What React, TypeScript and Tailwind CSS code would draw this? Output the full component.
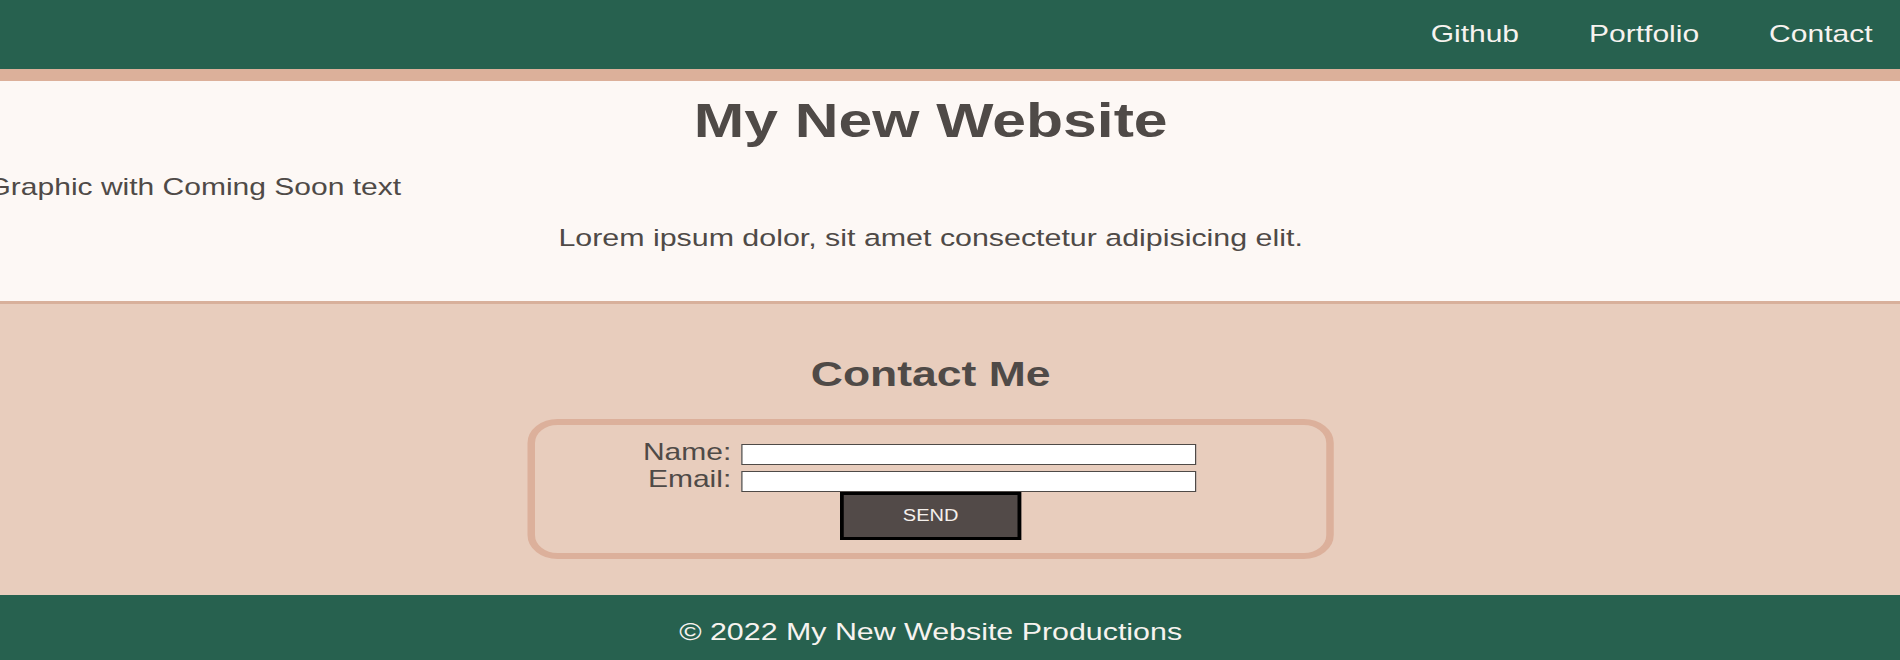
export default function App() {
  return (
    <div className="w-[1520px] origin-top-left scale-x-125 font-['Liberation_Sans',Arial,sans-serif] text-[#4f4a47]">
      <header className="h-[81px] bg-[#27614f] border-b-[12px] border-[#dcb09a] flex items-center justify-end gap-[56px] pr-[22px] pb-[2px]">
        <a className="text-[24px] leading-[28px] text-[#f7f3ef]">Github</a>
        <a className="text-[24px] leading-[28px] text-[#f7f3ef]">Portfolio</a>
        <a className="text-[24px] leading-[28px] text-[#f7f3ef]">Contact</a>
      </header>

      <section className="h-[223px] bg-[#fdf8f5] border-b-[3px] border-[#d8b09b] flex flex-col">
        <h1 className="w-[1489px] text-center mt-[11px] text-[48.5px] leading-[56px] font-bold">
          My New Website
        </h1>
        <p className="mt-[25px] ml-[-10px] text-[24px] leading-[28px] whitespace-nowrap">
          Graphic with Coming Soon text
        </p>
        <p className="mt-[23px] w-[1489px] text-center text-[24.3px] leading-[28px]">
          Lorem ipsum dolor, sit amet consectetur adipisicing elit.
        </p>
      </section>

      <section className="h-[291px] bg-[#e8cdbd] pt-[50px]">
        <div className="w-[1489px] flex flex-col">
          <h2 className="text-center text-[35.6px] leading-[40px] font-bold">Contact Me</h2>
          <form className="mt-[25px] mx-auto w-[645px] border-[6px] border-[#dcb09b] rounded-[24px] pt-[12.5px] pb-[13.5px] flex flex-col">
            <div className="pl-[37px] flex items-end h-[27px]">
              <label className="w-[120px] text-right text-[24px] leading-[27px]">Name:</label>
              <input type="text" className="ml-[8px] w-[364px] h-[21px] border border-[#4f4a47] bg-white outline-none" />
            </div>
            <div className="pl-[37px] flex items-end h-[27px]">
              <label className="w-[120px] text-right text-[24px] leading-[27px]">Email:</label>
              <input type="email" className="ml-[8px] w-[364px] h-[21px] border border-[#4f4a47] bg-white outline-none" />
            </div>
            <button type="button" className="mx-auto w-[145px] h-[48px] border-[3px] border-black bg-[#524a48] text-[16px] leading-[20px] text-[#f5f0ec]">
              SEND
            </button>
          </form>
        </div>
      </section>

      <footer className="h-[65px] bg-[#27614f] pt-[23px]">
        <p className="w-[1489px] text-center text-[24.3px] leading-[28px] text-[#f7f3ef]">
          © 2022 My New Website Productions
        </p>
      </footer>
    </div>
  );
}
